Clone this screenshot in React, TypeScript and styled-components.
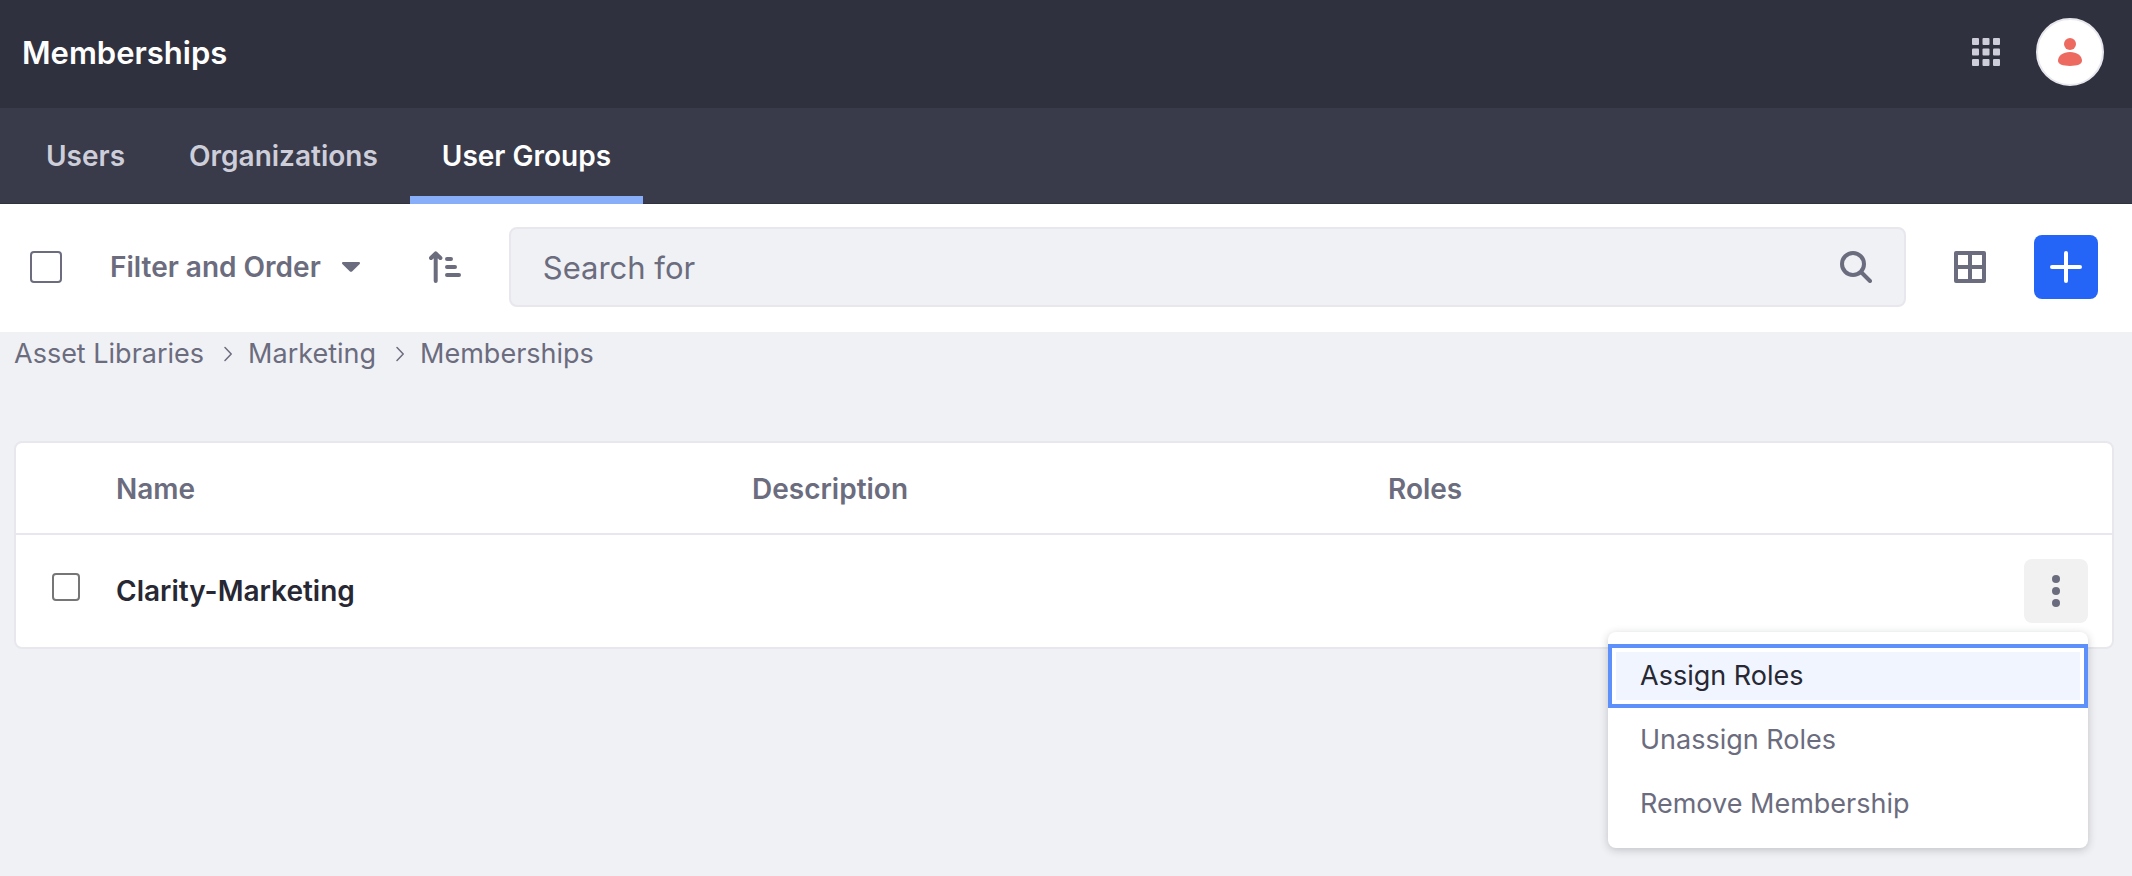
import React from 'react';
import styled, { createGlobalStyle, css } from 'styled-components';

const color = {
  header: '#30313f',
  nav: '#393a4a',
  muted: '#6b6c7e',
  dark: '#272833',
  light: '#cdced9',
  page: '#f0f1f5',
  line: '#e7e7ed',
  primary: '#2464f7',
  accent: '#88adf9',
  focus: '#5d90fa',
};

const GlobalStyle = createGlobalStyle`
  *, *::before, *::after { box-sizing: border-box; }
  body {
    margin: 0;
    background: ${color.page};
    color: ${color.muted};
    font-family: Inter, "Liberation Sans", sans-serif;
    font-size: 27px;
    line-height: 44px;
  }
  button, input { font: inherit; color: inherit; }
  a { color: inherit; text-decoration: none; }
  svg { display: block; flex: none; }
`;

const Page = styled.div`
  min-height: 100vh;
`;

const Header = styled.header`
  display: flex;
  align-items: center;
  justify-content: space-between;
  height: 108px;
  padding: 0 28px 4px 22px;
  background: ${color.header};
`;

const Title = styled.h1`
  margin: 0;
  padding-top: 2px;
  color: #fff;
  font-size: 31px;
  font-weight: 600;
`;

const HeaderActions = styled.div`
  display: flex;
  align-items: center;
  gap: 18px;
`;

const IconButton = styled.button<{ $tone?: 'plain' | 'primary' | 'pressed' | 'light' }>`
  display: flex;
  flex: none;
  align-items: center;
  justify-content: center;
  width: 64px;
  height: 64px;
  padding: 0;
  border: 0;
  border-radius: 8px;
  background: transparent;
  cursor: pointer;
  ${({ $tone }) => $tone === 'primary' && css`background: ${color.primary}; color: #fff;`}
  ${({ $tone }) => $tone === 'pressed' && css`background: #f1f1f1;`}
  ${({ $tone }) => $tone === 'light' && css`color: ${color.light};`}
`;

const Avatar = styled.button`
  display: flex;
  align-items: center;
  justify-content: center;
  width: 68px;
  height: 68px;
  padding: 0;
  border: 2px solid ${color.line};
  border-radius: 50%;
  background: #fff;
  color: #ec6a60;
  cursor: pointer;
`;

const Tabs = styled.nav`
  display: flex;
  height: 96px;
  padding: 0 14px;
  background: ${color.nav};
  box-shadow: inset 0 -1px 0 ${color.header};
`;

const Tab = styled.a<{ $active?: boolean }>`
  display: flex;
  align-items: center;
  padding: 0 32px;
  color: ${({ $active }) => ($active ? '#fff' : color.light)};
  font-size: 28px;
  font-weight: 600;
  box-shadow: ${({ $active }) => ($active ? `inset 0 -8px 0 ${color.accent}` : 'none')};
`;

const Toolbar = styled.section`
  display: flex;
  align-items: center;
  gap: 32px;
  height: 128px;
  padding: 0 34px 2px 30px;
  background: #fff;
`;

const Checkbox = styled.input<{ $size: number; $line: string }>`
  display: block;
  flex: none;
  appearance: none;
  width: ${({ $size }) => $size}px;
  height: ${({ $size }) => $size}px;
  margin: 0;
  border: 2px solid ${({ $line }) => $line};
  border-radius: 4px;
  background: #fff;
`;

const FilterButton = styled.button`
  display: flex;
  flex: none;
  align-items: center;
  gap: 16px;
  height: 64px;
  padding: 0 16px;
  border: 0;
  background: transparent;
  font-size: 28px;
  font-weight: 600;
  white-space: nowrap;
  cursor: pointer;
`;

const SearchBox = styled.form`
  display: flex;
  flex: 1;
  align-items: center;
  min-width: 0;
  height: 80px;
  padding-right: 16px;
  border: 2px solid ${color.line};
  border-radius: 8px;
  background: ${color.page};
`;

const SearchInput = styled.input`
  flex: 1;
  min-width: 0;
  height: 100%;
  padding: 0 32px;
  border: 0;
  outline: 0;
  background: transparent;
  font-size: 31px;
  &::placeholder { color: ${color.muted}; opacity: 1; }
`;

const Content = styled.main`
  padding: 0 18px 0 14px;
`;

const Breadcrumb = styled.ol`
  display: flex;
  align-items: center;
  margin: 0 0 65px;
  padding: 0;
  list-style: none;
`;

const Crumb = styled.li`
  display: flex;
  align-items: center;
  svg { margin: 0 16px 0 20px; }
`;

const TableCard = styled.div`
  border: 2px solid ${color.line};
  border-radius: 8px;
  background: #fff;
`;

const Table = styled.table`
  width: 100%;
  table-layout: fixed;
  border-collapse: separate;
  border-spacing: 0;
`;

const HeadCell = styled.th<{ $width?: number }>`
  width: ${({ $width }) => ($width ? `${$width}px` : 'auto')};
  height: 92px;
  padding: 2px 24px 0;
  border-bottom: 2px solid ${color.line};
  font-size: 28px;
  font-weight: 600;
  text-align: left;
`;

const Cell = styled.td`
  height: 112px;
  padding: 0 24px;
`;

const SelectCell = styled(Cell)`
  padding: 0 0 8px 36px;
`;

const NameLink = styled.a`
  color: ${color.dark};
  font-size: 28px;
  font-weight: 600;
`;

const MenuAnchor = styled.div`
  position: relative;
  width: 64px;
`;

const Menu = styled.div`
  position: absolute;
  z-index: 1;
  top: calc(100% + 9px);
  right: 0;
  width: 480px;
  padding: 12px 0;
  border-radius: 8px;
  background: #fff;
  box-shadow: 0 2px 8px rgba(39, 40, 51, 0.24);
`;

const MenuItem = styled.button<{ $focused?: boolean }>`
  display: block;
  width: 100%;
  height: 64px;
  padding: 0 32px;
  border: 0;
  background: transparent;
  text-align: left;
  cursor: pointer;
  ${({ $focused }) => $focused && css`
    background: #f0f5ff;
    color: ${color.dark};
    box-shadow: inset 0 0 0 4px ${color.focus}, inset 0 0 0 8px #fff;
  `}
`;

const AppsIcon = () => (
  <svg width="28" height="28" viewBox="0 0 28 28" fill="currentColor" aria-hidden="true">
    {[0, 10.5, 21].map((y) =>
      [0, 10.5, 21].map((x) => <rect key={`${x}-${y}`} x={x} y={y} width="7" height="7" rx="1" />)
    )}
  </svg>
);

const UserIcon = () => (
  <svg width="24" height="28" viewBox="0 0 24 28" fill="currentColor" aria-hidden="true">
    <circle cx="12" cy="6" r="6" />
    <path d="M12 14C5 14 0 18 0 22.600C0 26.600 5 28 12 28S24 26.600 24 22.600C24 18 19 14 12 14Z" />
  </svg>
);

const CaretIcon = () => (
  <svg width="28" height="28" viewBox="0 0 28 28" fill="currentColor" aria-hidden="true">
    <path d="M6 9H22C23 9 23.400 10.200 22.700 10.900L15.300 18.300C14.600 19 13.400 19 12.700 18.300L5.300 10.900C4.600 10.200 5 9 6 9Z" />
  </svg>
);

const OrderIcon = () => (
  <svg width="32" height="32" viewBox="0 0 32 32" fill="none" stroke="currentColor" strokeWidth="4" strokeLinecap="round" strokeLinejoin="round" aria-hidden="true">
    <path d="M6.700 30V3M2 7L6.700 2.300L11.400 7M18 8H22M18 16H26M18 24H30" />
  </svg>
);

const SearchIcon = () => (
  <svg width="32" height="32" viewBox="0 0 32 32" fill="none" stroke="currentColor" strokeWidth="4" strokeLinecap="round" aria-hidden="true">
    <circle cx="13" cy="13" r="11" />
    <path d="M21.500 21.500L30 30" />
  </svg>
);

const GridIcon = () => (
  <svg width="32" height="32" viewBox="0 0 32 32" fill="none" stroke="currentColor" strokeWidth="4" strokeLinejoin="round" aria-hidden="true">
    <path d="M2 2H30V30H2ZM16 2V30M2 16H30" />
  </svg>
);

const PlusIcon = () => (
  <svg width="32" height="32" viewBox="0 0 32 32" fill="none" stroke="currentColor" strokeWidth="4" strokeLinecap="round" aria-hidden="true">
    <path d="M16 2V30M2 16H30" />
  </svg>
);

const ChevronIcon = () => (
  <svg width="8" height="16" viewBox="0 0 8 16" fill="none" stroke="currentColor" strokeWidth="1.500" strokeLinecap="round" strokeLinejoin="round" aria-hidden="true">
    <path d="M1 1.500L7.200 8L1 14.500" />
  </svg>
);

const KebabIcon = () => (
  <svg width="8" height="32" viewBox="0 0 8 32" fill="currentColor" aria-hidden="true">
    <circle cx="4" cy="4" r="4" />
    <circle cx="4" cy="16" r="4" />
    <circle cx="4" cy="28" r="4" />
  </svg>
);

const tabs = ['Users', 'Organizations', 'User Groups'];
const crumbs = ['Asset Libraries', 'Marketing', 'Memberships'];
const actions = ['Assign Roles', 'Unassign Roles', 'Remove Membership'];

export default function App() {
  return (
    <Page>
      <GlobalStyle />
      <Header>
        <Title>Memberships</Title>
        <HeaderActions>
          <IconButton type="button" $tone="light" aria-label="Applications"><AppsIcon /></IconButton>
          <Avatar type="button" aria-label="User profile"><UserIcon /></Avatar>
        </HeaderActions>
      </Header>
      <Tabs>
        {tabs.map((tab) => (
          <Tab key={tab} href="#" $active={tab === 'User Groups'}>{tab}</Tab>
        ))}
      </Tabs>
      <Toolbar>
        <Checkbox type="checkbox" aria-label="Select all" $size={32} $line={color.muted} />
        <FilterButton type="button">Filter and Order<CaretIcon /></FilterButton>
        <IconButton type="button" aria-label="Reverse sort direction"><OrderIcon /></IconButton>
        <SearchBox role="search">
          <SearchInput type="text" placeholder="Search for" aria-label="Search for" />
          <IconButton type="button" aria-label="Search"><SearchIcon /></IconButton>
        </SearchBox>
        <IconButton type="button" aria-label="Select view"><GridIcon /></IconButton>
        <IconButton type="button" $tone="primary" aria-label="Add"><PlusIcon /></IconButton>
      </Toolbar>
      <Content>
        <Breadcrumb>
          {crumbs.map((crumb, i) => (
            <Crumb key={crumb}>
              {i > 0 && <ChevronIcon />}
              <a href="#">{crumb}</a>
            </Crumb>
          ))}
        </Breadcrumb>
        <TableCard>
          <Table>
            <thead>
              <tr>
                <HeadCell $width={76} />
                <HeadCell>Name</HeadCell>
                <HeadCell>Description</HeadCell>
                <HeadCell>Roles</HeadCell>
                <HeadCell $width={112} />
              </tr>
            </thead>
            <tbody>
              <tr>
                <SelectCell>
                  <Checkbox type="checkbox" aria-label="Select Clarity-Marketing" $size={28} $line="#767676" />
                </SelectCell>
                <Cell><NameLink href="#">Clarity-Marketing</NameLink></Cell>
                <Cell />
                <Cell />
                <Cell>
                  <MenuAnchor>
                    <IconButton type="button" $tone="pressed" aria-label="Show actions"><KebabIcon /></IconButton>
                    <Menu role="menu">
                      {actions.map((action, i) => (
                        <MenuItem key={action} type="button" role="menuitem" $focused={i === 0}>{action}</MenuItem>
                      ))}
                    </Menu>
                  </MenuAnchor>
                </Cell>
              </tr>
            </tbody>
          </Table>
        </TableCard>
      </Content>
    </Page>
  );
}
